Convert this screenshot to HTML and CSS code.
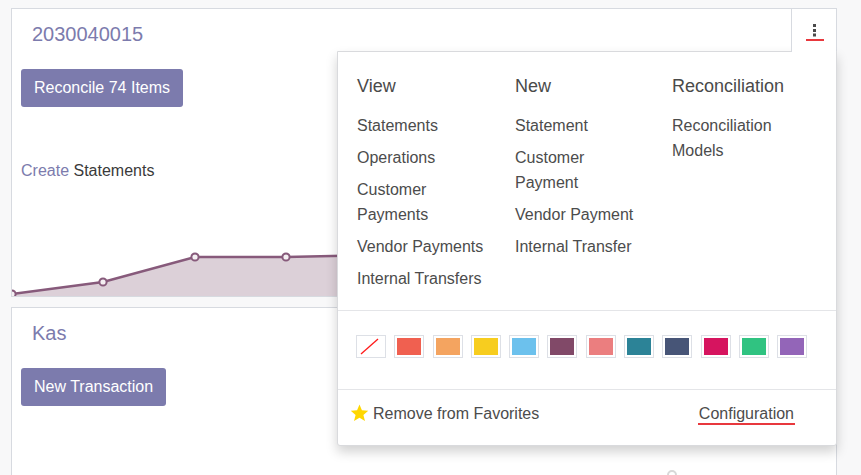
FILE: index.html
```html
<!DOCTYPE html>
<html>
<head>
<meta charset="utf-8">
<link rel="stylesheet" href="styles.css">
</head>
<body>
<div class="board">
  <div class="card card-first">
    <div class="card-body">
      <div class="title">2030040015</div>
      <div class="actions"><span class="btn">Reconcile 74 Items</span></div>
      <div class="create"><span class="link">Create</span> Statements</div>
    </div>
    <svg class="chart" width="824" height="114" viewBox="0 1 824 114">
      <polygon fill="#dcd0d8" points="0,113 91,101 183,76 274,76 366,74 457,70 549,72 640,66 732,68 824,64 824,115 0,115"/>
      <polyline fill="none" stroke="#875a7b" stroke-width="2.5" points="0,113 91,101 183,76 274,76 366,74 457,70 549,72 640,66 732,68 824,64"/>
      <g fill="#f4eff2" stroke="#875a7b" stroke-width="2">
        <circle cx="0" cy="113" r="3.6"/>
        <circle cx="91" cy="101" r="3.6"/>
        <circle cx="183" cy="76" r="3.6"/>
        <circle cx="274" cy="76" r="3.6"/>
        <circle cx="366" cy="74" r="3.6"/>
      </g>
    </svg>

    <div class="kebab">
      <span class="kebab-inner">
        <svg width="3" height="13" viewBox="0 0 3 13"><rect x="0" y="0" width="3" height="3" fill="#4a4a4a"/><rect x="0" y="5" width="3" height="3" fill="#4a4a4a"/><rect x="0" y="9.5" width="3" height="3" fill="#4a4a4a"/></svg>
      </span>
    </div>

    <div class="dropdown">
      <div class="dd-cols">
        <div class="dd-col">
          <div class="dd-head">View</div>
          <div class="dd-item">Statements</div>
          <div class="dd-item">Operations</div>
          <div class="dd-item">Customer Payments</div>
          <div class="dd-item">Vendor Payments</div>
          <div class="dd-item">Internal Transfers</div>
        </div>
        <div class="dd-col">
          <div class="dd-head">New</div>
          <div class="dd-item">Statement</div>
          <div class="dd-item">Customer Payment</div>
          <div class="dd-item">Vendor Payment</div>
          <div class="dd-item">Internal Transfer</div>
        </div>
        <div class="dd-col dd-col-last">
          <div class="dd-head">Reconciliation</div>
          <div class="dd-item">Reconciliation Models</div>
        </div>
      </div>
      <div class="dd-colors">
        <span class="sw sw-none"><svg width="28" height="21" viewBox="0 0 28 21"><line x1="4" y1="18" x2="21" y2="3" stroke="#ff1a1a" stroke-width="1.3"/></svg></span>
        <span class="sw" style="background:#f06050"></span>
        <span class="sw" style="background:#f4a460"></span>
        <span class="sw" style="background:#f7cd1f"></span>
        <span class="sw" style="background:#6cc1ed"></span>
        <span class="sw" style="background:#814968"></span>
        <span class="sw" style="background:#eb7e7f"></span>
        <span class="sw" style="background:#2c8397"></span>
        <span class="sw" style="background:#475577"></span>
        <span class="sw" style="background:#d6145f"></span>
        <span class="sw" style="background:#30c381"></span>
        <span class="sw" style="background:#9365b8"></span>
      </div>
      <div class="dd-foot">
        <span class="fav"><svg class="star" width="19" height="18" viewBox="0 0 24 23"><polygon fill="#ffd700" points="12,0.5 15.1,8 23.2,8.6 17,13.9 19,21.8 12,17.5 5,21.8 7,13.9 0.8,8.6 8.9,8"/></svg>Remove from Favorites</span>
        <span class="config">Configuration</span>
      </div>
    </div>
  </div>

  <div class="card card-second">
    <div class="card-body">
      <div class="title">Kas</div>
      <div class="actions"><span class="btn">New Transaction</span></div>
    </div>
    <svg class="chart2" width="824" height="120" viewBox="0 0 824 120">
      <circle cx="660" cy="16" r="4" fill="#fff" stroke="#d8d8d8" stroke-width="2"/>
    </svg>
  </div>
</div>
</body>
</html>
```

FILE: styles.css
```css
html, body {
  margin: 0;
  padding: 0;
}
body {
  background: #f8f8f9;
  font-family: "Liberation Sans", Arial, sans-serif;
  color: #4c4c4c;
  padding: 8px 0 0 11px;
  overflow: hidden;
  height: 475px;
  box-sizing: border-box;
}
.board {
  width: 826px;
}
.card {
  position: relative;
  background: #fff;
  border: 1px solid #d7dae0;
}
.card-second {
  margin-top: 10px;
}
.card-body {
  padding: 0 9px;
}
.title {
  padding: 12px 0 0 11px;
  font-size: 20px;
  line-height: 26px;
  color: #7c7bad;
}
.actions {
  margin-top: 22px;
  display: flex;
}
.btn {
  display: inline-block;
  background: #7c7bad;
  color: #fff;
  font-size: 16px;
  line-height: 26px;
  padding: 6px 13px;
  border-radius: 3px;
}
.create {
  margin-top: 53px;
  font-size: 16px;
  line-height: 22px;
  color: #3a3a3a;
}
.link {
  color: #7c7bad;
}
.chart {
  display: block;
}
.chart2 {
  display: block;
  margin-top: 53px;
}

/* kebab */
.kebab {
  position: absolute;
  top: 0;
  right: 0;
  width: 44px;
  height: 43px;
  background: #fff;
  border-left: 1px solid #d7dae0;
  z-index: 3;
  display: flex;
  justify-content: center;
}
.kebab-inner {
  margin-top: 15px;
  margin-left: 1px;
  width: 18px;
  height: 15px;
  border-bottom: 2px solid #e8383d;
  display: flex;
  justify-content: center;
}
.kebab-inner svg {
  display: block;
}

/* dropdown */
.dropdown {
  position: absolute;
  top: 42px;
  left: 325px;
  right: -1px;
  background: #fff;
  border: 1px solid #d9dadd;
  border-radius: 0 0 3px 3px;
  box-shadow: 0 6px 12px rgba(0, 0, 0, 0.18);
  z-index: 2;
}
.dd-cols {
  display: grid;
  grid-template-columns: 158px 157px 1fr;
  padding: 22px 0 12px 19px;
  border-bottom: 1px solid #e4e5e8;
}
.dd-col {
  padding-right: 26px;
}
.dd-col-last {
  padding-right: 10px;
}
.dd-head {
  font-size: 18px;
  line-height: 24px;
  margin-bottom: 15px;
  color: #4a4a4a;
}
.dd-item {
  font-size: 16px;
  line-height: 25px;
  margin-bottom: 7px;
  color: #4c4c4c;
}
.dd-colors {
  display: flex;
  gap: 8.3px;
  padding: 24px 0 31px 18px;
  border-bottom: 1px solid #e4e5e8;
}
.sw {
  display: block;
  width: 30px;
  height: 23px;
  box-sizing: border-box;
  border: 1px solid #dde0e6;
  box-shadow: inset 0 0 0 2px #fff;
}
.sw-none {
  background: #fff;
}
.sw-none svg {
  display: block;
}
.dd-foot {
  display: flex;
  justify-content: space-between;
  align-items: flex-start;
  padding: 13px 41px 20px 12px;
  font-size: 16px;
  line-height: 22px;
}
.fav {
  display: flex;
  align-items: center;
  color: #4c4c4c;
}
.star {
  display: block;
  margin-right: 4px;
  margin-top: -3px;
}
.config {
  display: inline-block;
  line-height: 18px;
  margin-top: 2px;
  padding: 0 1px;
  border-bottom: 2px solid #e8383d;
  color: #4c4c4c;
}
```
